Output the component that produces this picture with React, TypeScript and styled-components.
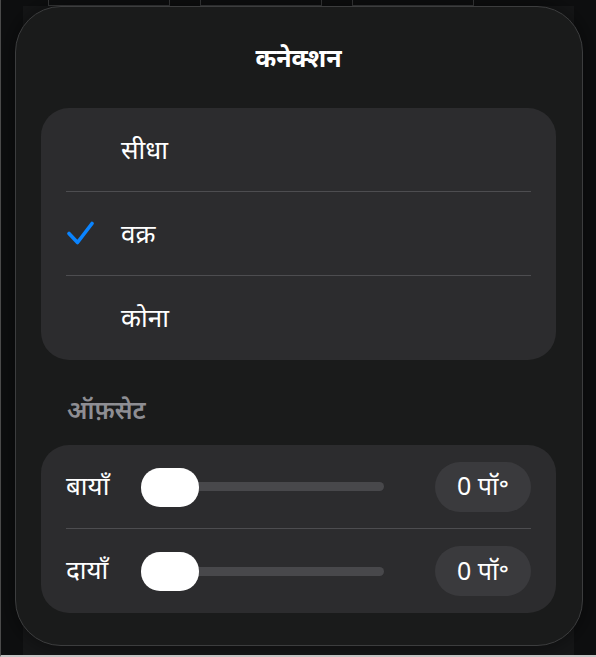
import React from 'react';
import styled, { createGlobalStyle } from 'styled-components';

const Global = createGlobalStyle`
  html, body {
    margin: 0;
    padding: 0;
    background: #0e0f10;
  }
  body {
    font-family: "Noto Sans", "Noto Sans Devanagari", "Lohit Devanagari", sans-serif;
    -webkit-font-smoothing: antialiased;
  }
`;

const Screen = styled.div`
  position: relative;
  width: 596px;
  height: 657px;
  box-sizing: border-box;
  border-left: 1px solid #4a4a4a;
  border-bottom: 2px solid #c4c4c4;
  background: #0e0f10;
  overflow: hidden;
`;

const BackStrip = styled.div`
  display: flex;
  gap: 30px;
  padding-left: 47px;
  height: 6px;
`;

const BackCell = styled.div`
  width: 120px;
  height: 5px;
  border: 1px solid #3a3b3c;
  border-top: none;
`;

const Backdrop = styled.div`
  margin: 0 22px;
  height: 651px;
  background: #161718;
`;

const Popover = styled.div`
  position: absolute;
  left: 14px;
  top: 6px;
  width: 568px;
  height: 640px;
  box-sizing: border-box;
  border: 1px solid #3c3d3e;
  border-radius: 46px;
  background: #1a1b1b;
  padding: 0 26px 0 25px;
  display: flex;
  flex-direction: column;
  box-shadow: 0 0 24px rgba(0, 0, 0, 0.5);
`;

const Title = styled.h1`
  margin: 0;
  height: 101px;
  display: flex;
  align-items: center;
  justify-content: center;
  padding-bottom: 2px;
  box-sizing: border-box;
  color: #ffffff;
  font-size: 25px;
  font-weight: 700;
`;

const Group = styled.div`
  background: #2c2c2e;
  border-radius: 28px;
  padding: 0 25px;
`;

const Row = styled.div<{ $last?: boolean }>`
  height: 84px;
  box-sizing: border-box;
  display: flex;
  align-items: center;
  border-bottom: ${(p) => (p.$last ? 'none' : '1.5px solid #4d4d50')};
`;

const CheckSlot = styled.div`
  width: 55px;
  display: flex;
  align-items: center;
`;

const OptionText = styled.span`
  color: #ffffff;
  font-size: 26px;
  line-height: 1;
  padding-bottom: 2px;
`;

const SectionHeader = styled.h2`
  margin: 0;
  height: 85px;
  box-sizing: border-box;
  padding: 32px 0 0 26px;
  color: #8e8e93;
  font-size: 25px;
  font-weight: 600;
`;

const Label = styled.span`
  width: 75px;
  color: #ffffff;
  font-size: 26px;
  padding-bottom: 4px;
`;

const Slider = styled.div`
  position: relative;
  width: 243px;
  height: 40px;
  display: flex;
  align-items: center;
`;

const Track = styled.div`
  width: 100%;
  height: 9px;
  border-radius: 5px;
  background: #48484b;
`;

const Thumb = styled.div`
  position: absolute;
  left: 0;
  top: 1px;
  width: 58px;
  height: 39px;
  border-radius: 19px;
  background: #ffffff;
`;

const ValuePill = styled.div`
  margin-left: auto;
  width: 96px;
  height: 50px;
  border-radius: 25px;
  background: #3a3a3d;
  color: #ffffff;
  font-size: 25px;
  display: flex;
  align-items: center;
  justify-content: center;
  padding-bottom: 3px;
  box-sizing: border-box;
`;

const Check = () => (
  <svg width="28" height="26" viewBox="0 0 28 26">
    <path
      d="M3 12.5 L11.5 21.5 L26 2.5"
      fill="none"
      stroke="#0a84ff"
      strokeWidth="3.6"
      strokeLinecap="round"
      strokeLinejoin="round"
    />
  </svg>
);

const options = [
  { label: 'सीधा', checked: false },
  { label: 'वक्र', checked: true },
  { label: 'कोना', checked: false },
];

const offsets = ['बायाँ', 'दायाँ'];

export default function App() {
  return (
    <Screen>
      <Global />
      <BackStrip>
        <BackCell />
        <BackCell />
        <BackCell />
      </BackStrip>
      <Backdrop />
      <Popover>
        <Title>कनेक्शन</Title>
        <Group>
          {options.map((o, i) => (
            <Row key={o.label} $last={i === options.length - 1}>
              <CheckSlot>{o.checked && <Check />}</CheckSlot>
              <OptionText>{o.label}</OptionText>
            </Row>
          ))}
        </Group>
        <SectionHeader>ऑफ़सेट</SectionHeader>
        <Group>
          {offsets.map((label, i) => (
            <Row key={label} $last={i === offsets.length - 1}>
              <Label>{label}</Label>
              <Slider>
                <Track />
                <Thumb />
              </Slider>
              <ValuePill>0 पॉ॰</ValuePill>
            </Row>
          ))}
        </Group>
      </Popover>
    </Screen>
  );
}
